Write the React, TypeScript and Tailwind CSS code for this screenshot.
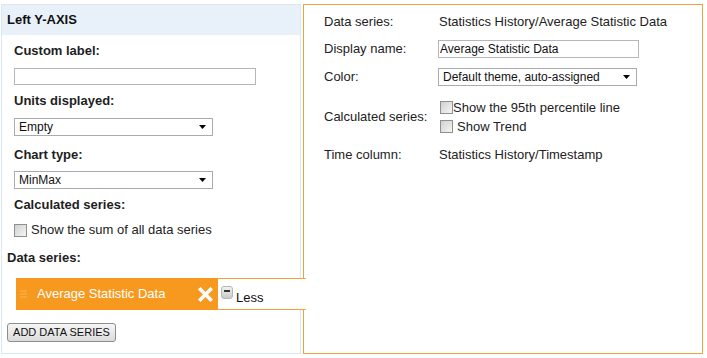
import React from 'react';

const Checkbox = () => <span className="inline-block w-[13px] h-[13px] border border-[#8e8f8f] bg-linear-to-br from-[#d0d0d0] to-[#f6f6f6] shrink-0"></span>;

const Select = ({ value, width }: { value: string; width: string }) => <div className={`${width} h-[18px] border border-[#a9abb0] bg-white flex items-center justify-between pl-[4px] pr-[6px] text-[12px] text-[#111]`}>
    <span>{value}</span>
    <svg width="7" height="4" viewBox="0 0 7 4"><path d="M0 0h7L3.5 4z" fill="#000" /></svg>
  </div>;

const FieldLabel = ({ children, className = '' }: { children: React.ReactNode; className?: string }) => <div className={`h-[16px] leading-[16px] font-bold text-[13px] text-[#1e1e1e] ${className}`}>{children}</div>;

const DetailRow = ({ label, children, className = '' }: { label: string; children: React.ReactNode; className?: string }) => <div className={`flex items-center ${className}`}>
    <div className="w-[114px] shrink-0">{label}</div>
    {children}
  </div>;

export default function App() {
  return <div className="flex pt-[4px] pl-[1px] font-['Liberation_Sans',Arial,sans-serif] text-[13px] text-[#222] bg-white">
      {/* left y-axis panel */}
      <div className="w-[300px] h-[350px] border border-[#dbe7f2] flex flex-col">
        <div className="h-[30px] bg-[#e8f1fa] pl-[5px] flex items-center font-bold text-[13px] text-[#111]">Left Y-AXIS</div>
        <div className="pl-[12px]">
          <FieldLabel className="mt-[8px]">Custom label:</FieldLabel>
          <div className="mt-[9px] w-[242px] h-[17px] border border-[#b4b6bb] bg-white"></div>
          <FieldLabel className="mt-[8px]">Units displayed:</FieldLabel>
          <div className="mt-[9px]"><Select value="Empty" width="w-[199px]" /></div>
          <FieldLabel className="mt-[11px]">Chart type:</FieldLabel>
          <div className="mt-[8px]"><Select value="MinMax" width="w-[199px]" /></div>
          <FieldLabel className="mt-[8px]">Calculated series:</FieldLabel>
          <div className="mt-[9px] h-[16px] flex items-center gap-[4px]">
            <Checkbox />
            <span>Show the sum of all data series</span>
          </div>
        </div>
        <FieldLabel className="mt-[12px] pl-[5px]">Data series:</FieldLabel>

        {/* selected series row, opens into the detail panel */}
        <div className="relative z-10 mt-[12px] ml-[14px] w-[290px] h-[32px] flex">
          <div className="w-[202px] shrink-0 bg-[#f7991e] flex items-center">
            <svg className="ml-[4px]" width="7" height="8" viewBox="0 0 7 8">
              <path d="M0 1h7M0 4h7M0 7h7" stroke="#fbb45a" strokeWidth="1" />
            </svg>
            <span className="ml-[10px] text-white text-[13px]">Average Statistic Data</span>
            <svg className="ml-auto mr-[5px]" width="15" height="15" viewBox="0 0 15 15">
              <path d="M2.5 2.5l10 10M12.5 2.5l-10 10" stroke="#fff" strokeWidth="3.6" strokeLinecap="square" />
            </svg>
          </div>
          <div className="flex-1 bg-white border-t border-b border-[#eca33c] flex items-start pl-[3px] pt-[7px]">
            <span className="w-[12px] h-[13px] rounded-[3px] border border-[#b5b5b5] bg-linear-to-b from-[#f2f2f2] to-[#c9c9c9] flex justify-center pt-[3px]">
              <span className="w-[6px] h-[2px] bg-[#333]"></span>
            </span>
            <span className="ml-[3px] mt-[5px] text-[13px] leading-[14px] text-[#111]">Less</span>
          </div>
        </div>

        <button className="mt-[13px] ml-[5px] w-[109px] h-[19px] border border-[#8d8d8d] rounded-[3px] bg-linear-to-b from-[#f6f6f6] to-[#dcdcdc] text-[11px] text-[#111] flex items-center justify-center">ADD DATA SERIES</button>
      </div>

      {/* series detail panel */}
      <div className="ml-[2px] w-[400px] h-[350px] border border-[#eca33c] pl-[20px] pt-[9px] text-[13px] text-[#222]">
        <DetailRow label="Data series:" className="h-[16px]">
          <span className="ml-[1px]">Statistics History/Average Statistic Data</span>
        </DetailRow>
        <DetailRow label="Display name:" className="mt-[10px] h-[18px]">
          <div className="w-[201px] h-[18px] border border-[#b4b6bb] bg-white pl-[1px] flex items-center text-[12px] text-[#111]">Average Statistic Data</div>
        </DetailRow>
        <DetailRow label="Color:" className="mt-[10px] h-[18px]">
          <Select value="Default theme, auto-assigned" width="w-[199px]" />
        </DetailRow>
        <DetailRow label="Calculated series:" className="mt-[12px]">
          <div className="ml-[2px] flex flex-col">
            <div className="h-[19px] flex items-center">
              <Checkbox />
              <span>Show the 95th percentile line</span>
            </div>
            <div className="h-[19px] flex items-center gap-[4px]">
              <Checkbox />
              <span>Show Trend</span>
            </div>
          </div>
        </DetailRow>
        <DetailRow label="Time column:" className="mt-[11px] h-[16px]">
          <span className="ml-[1px]">Statistics History/Timestamp</span>
        </DetailRow>
      </div>
    </div>;
}
